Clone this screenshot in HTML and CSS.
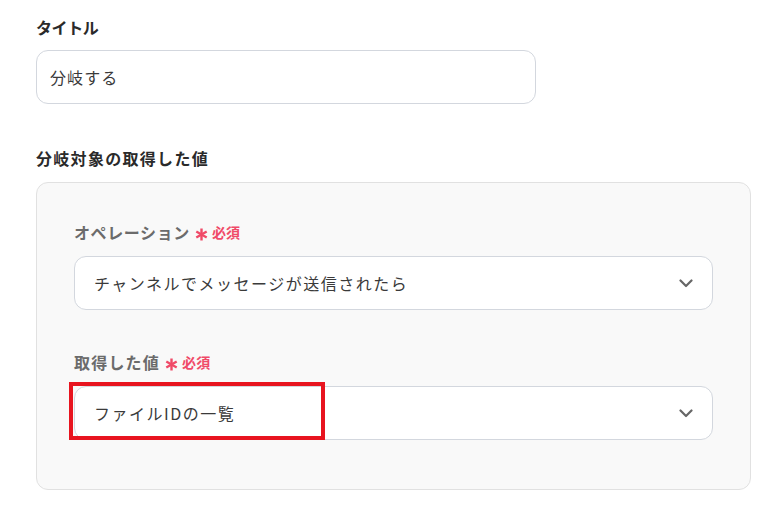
FILE: index.html
```html
<!DOCTYPE html>
<html lang="ja">
<head>
<meta charset="utf-8">
<link rel="stylesheet" href="styles.css">
</head>
<body>
<div class="page">
  <div class="field-label kana">タイトル</div>
  <div class="input title-input">分岐する</div>

  <div class="field-label section-label">分岐対象の取得した値</div>
  <div class="panel">
    <div class="sub-label">オペレーション<span class="req"><svg class="ast" width="13" height="13" viewBox="0 0 13 13"><g stroke="#f04a68" stroke-width="2.4" stroke-linecap="butt"><path d="M6.5 0.5 V12.5"/><path d="M1.3 3.5 L11.7 9.5"/><path d="M1.3 9.5 L11.7 3.5"/></g></svg>必須</span></div>
    <div class="select">
      <span>チャンネルでメッセージが送信されたら</span>
      <svg class="chev" width="14" height="9" viewBox="0 0 14 9"><path d="M1.5 1.5 L7 7 L12.5 1.5" fill="none" stroke="#666" stroke-width="2.2" stroke-linecap="round" stroke-linejoin="round"/></svg>
    </div>
    <div class="sub-label second">取得した値<span class="req"><svg class="ast" width="13" height="13" viewBox="0 0 13 13"><g stroke="#f04a68" stroke-width="2.4" stroke-linecap="butt"><path d="M6.5 0.5 V12.5"/><path d="M1.3 3.5 L11.7 9.5"/><path d="M1.3 9.5 L11.7 3.5"/></g></svg>必須</span></div>
    <div class="select-wrap">
      <div class="select">
        <span>ファイルIDの一覧</span>
        <svg class="chev" width="14" height="9" viewBox="0 0 14 9"><path d="M1.5 1.5 L7 7 L12.5 1.5" fill="none" stroke="#666" stroke-width="2.2" stroke-linecap="round" stroke-linejoin="round"/></svg>
      </div>
      <div class="highlight"></div>
    </div>
  </div>
</div>
</body>
</html>
```

FILE: styles.css
```css
* { box-sizing: border-box; }
html, body {
  margin: 0;
  padding: 0;
  background: #ffffff;
}
body {
  font-family: "Noto Sans CJK JP", "Noto Sans", sans-serif;
  color: #333;
}
.page {
  width: 780px;
  padding: 15px 30px 0 36px;
}
.field-label {
  font-size: 16px;
  font-weight: 700;
  line-height: 24px;
  letter-spacing: 1.3px;
  color: #2a2a2a;
}
.field-label.kana {
  letter-spacing: -0.4px;
}
.input {
  margin-top: 11px;
  width: 500px;
  height: 54px;
  border: 1px solid #d3d7de;
  border-radius: 12px;
  background: #fff;
  display: flex;
  align-items: center;
  padding-left: 13px;
  font-size: 16px;
  letter-spacing: 1.1px;
  color: #3a3a3a;
}
.section-label {
  margin-top: 42px;
}
.panel {
  margin-top: 12px;
  width: 715px;
  height: 308px;
  background: #f9f9f9;
  border: 1px solid #e1e1e1;
  border-radius: 12px;
  padding: 37px 37px 0 37px;
}
.sub-label {
  font-size: 16px;
  font-weight: 700;
  line-height: 24px;
  color: #6b6b6b;
  letter-spacing: 0.6px;
  display: flex;
  align-items: center;
}
.sub-label.second {
  margin-top: 40px;
  letter-spacing: 1.2px;
}
.req {
  display: inline-flex;
  align-items: center;
  margin-left: 5px;
  color: #f04a68;
  font-size: 14px;
  font-weight: 700;
  letter-spacing: 0.2px;
}
.ast {
  display: block;
  margin-right: 4px;
  position: relative;
  top: 2px;
}
.select-wrap {
  position: relative;
  margin-top: 12px;
}
.select {
  margin-top: 12px;
  width: 639px;
  height: 54px;
  border: 1px solid #d3d7de;
  border-radius: 12px;
  background: #fff;
  display: flex;
  align-items: center;
  justify-content: space-between;
  padding: 0 19px 0 19px;
  font-size: 16px;
  letter-spacing: 1.5px;
  color: #3a3a3a;
}
.select-wrap .select {
  margin-top: 0;
}
.chev {
  display: block;
}
.highlight {
  position: absolute;
  left: -5px;
  top: -4px;
  width: 256px;
  height: 58px;
  border: 4.5px solid #e8141f;
}
```
